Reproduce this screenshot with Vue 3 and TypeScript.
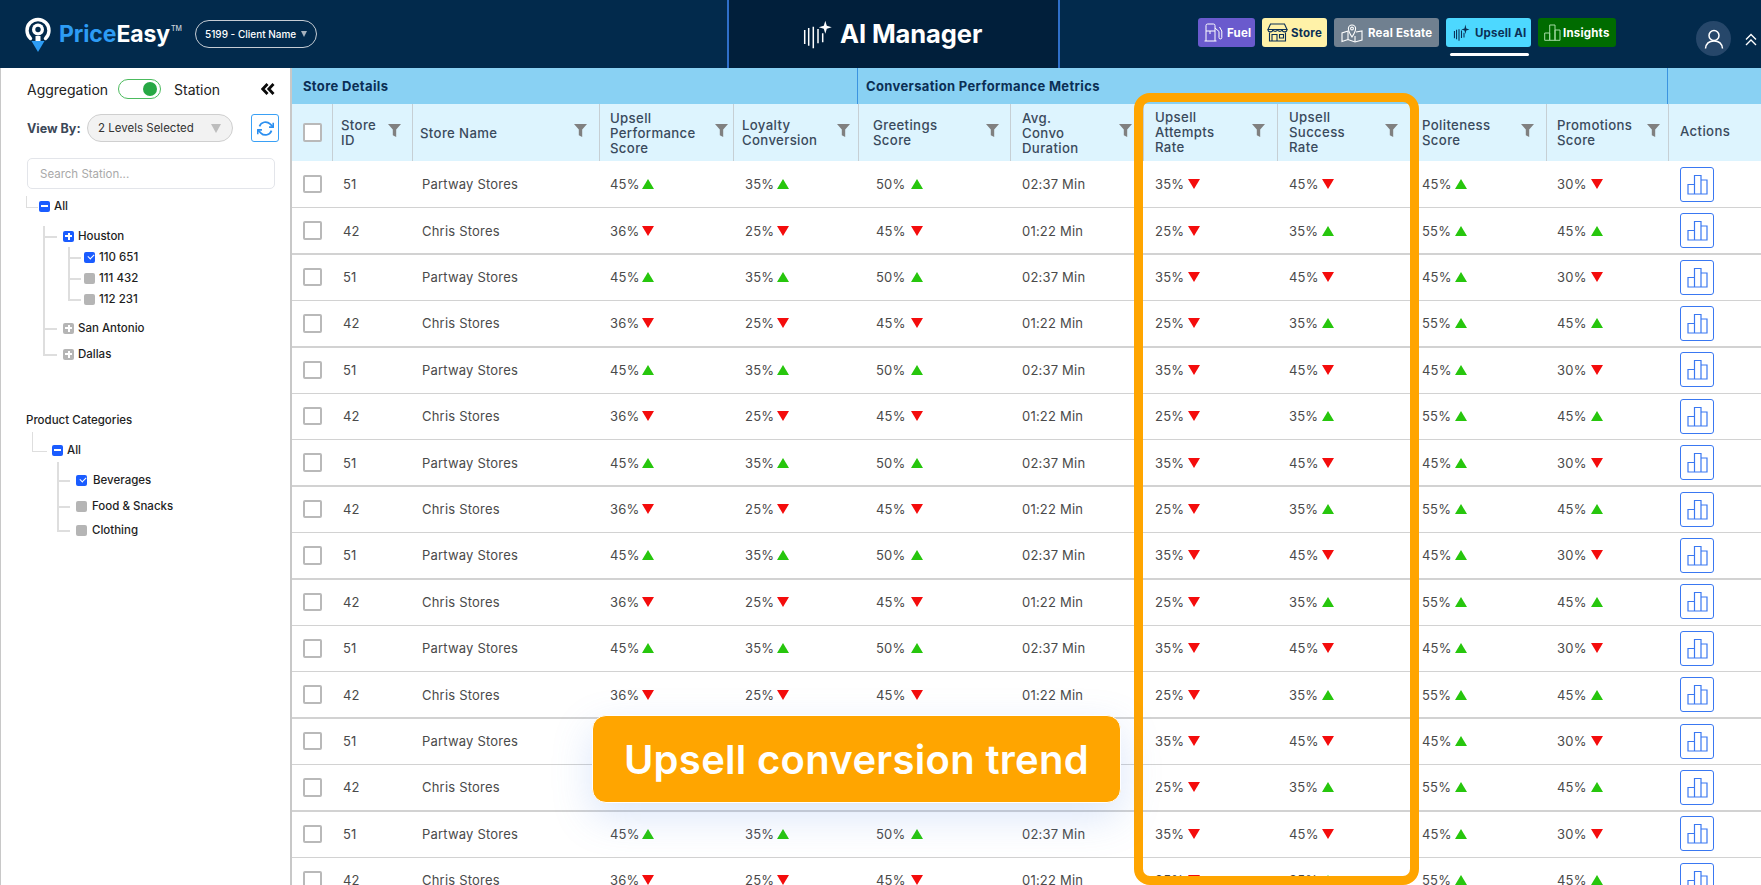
<script setup lang="ts">
type Trend = { v: string; up: boolean }
type Row = {
  id: string
  name: string
  perf: Trend
  loyal: Trend
  greet: Trend
  dur: string
  attempts: Trend
  success: Trend
  polite: Trend
  promo: Trend
}

const a: Row = {
  id: '51',
  name: 'Partway Stores',
  perf: { v: '45%', up: true },
  loyal: { v: '35%', up: true },
  greet: { v: '50%', up: true },
  dur: '02:37 Min',
  attempts: { v: '35%', up: false },
  success: { v: '45%', up: false },
  polite: { v: '45%', up: true },
  promo: { v: '30%', up: false },
}
const b: Row = {
  id: '42',
  name: 'Chris Stores',
  perf: { v: '36%', up: false },
  loyal: { v: '25%', up: false },
  greet: { v: '45%', up: false },
  dur: '01:22 Min',
  attempts: { v: '25%', up: false },
  success: { v: '35%', up: true },
  polite: { v: '55%', up: true },
  promo: { v: '45%', up: true },
}
const rows: Row[] = Array.from({ length: 16 }, (_, i) => (i % 2 === 0 ? a : b))

const heads: { cls: string; lines: string[] }[] = [
  { cls: 'c-id', lines: ['Store', 'ID'] },
  { cls: 'c-name', lines: ['Store Name'] },
  { cls: 'c-perf', lines: ['Upsell', 'Performance', 'Score'] },
  { cls: 'c-loyal', lines: ['Loyalty', 'Conversion'] },
  { cls: 'c-greet', lines: ['Greetings', 'Score'] },
  { cls: 'c-dur', lines: ['Avg.', 'Convo', 'Duration'] },
  { cls: 'c-att', lines: ['Upsell', 'Attempts', 'Rate'] },
  { cls: 'c-succ', lines: ['Upsell', 'Success', 'Rate'] },
  { cls: 'c-pol', lines: ['Politeness', 'Score'] },
  { cls: 'c-promo', lines: ['Promotions', 'Score'] },
]

const trendCols: { cls: string; key: 'perf' | 'loyal' | 'greet' | 'attempts' | 'success' | 'polite' | 'promo' }[] = [
  { cls: 'c-perf', key: 'perf' },
  { cls: 'c-loyal', key: 'loyal' },
  { cls: 'c-greet', key: 'greet' },
]
const trendCols2: typeof trendCols = [
  { cls: 'c-att', key: 'attempts' },
  { cls: 'c-succ', key: 'success' },
  { cls: 'c-pol', key: 'polite' },
  { cls: 'c-promo', key: 'promo' },
]
</script>

<template>
  <div class="page">
    <header class="top">
      <div class="top-left">
        <div class="logo">
          <svg class="pin" width="28" height="38" viewBox="0 0 28 38">
            <path d="M6.5 23.5A11 11 0 1 1 21.5 23.5" fill="none" stroke="#fff" stroke-width="3.4" stroke-linecap="round" />
            <circle cx="14" cy="14.5" r="6" fill="#fff" />
            <circle cx="14" cy="14.5" r="2.7" fill="#022a4c" />
            <path d="M11.5 21h5v5h-5z" fill="#fff" />
            <path d="M7.5 26H20.5L14 37Z" fill="#2d9cf4" />
          </svg>
          <span class="brand"><span class="brand-a">Price</span>Easy<sup class="tm">TM</sup></span>
        </div>
        <div class="client">
          <span>5199 - Client Name</span>
          <i class="client-arrow"></i>
        </div>
      </div>

      <div class="top-center">
        <svg class="ai" width="32" height="32" viewBox="0 0 32 32" fill="none" stroke="currentColor" stroke-width="1.5">
          <path d="M2.7 13V27M6.7 11V28.7M11.3 9.7V31.3M16 12V26.3M20.7 16.3V25.3" />
          <path d="M23.3 3.8L24.8 8.8L29.8 10.3L24.8 11.8L23.3 16.8L21.8 11.8L16.8 10.3L21.8 8.8Z" fill="currentColor" stroke="none" />
        </svg>
        <span class="ai-title">AI Manager</span>
      </div>

      <div class="top-right">
        <nav class="pills">
          <a class="pill p-fuel">
            <svg width="19" height="19" viewBox="0 0 19 19" fill="none" stroke="currentColor" stroke-width="1">
              <path d="M2 18V2.6A1.6 1.6 0 0 1 3.6 1H9.4A1.6 1.6 0 0 1 11 2.6V18M.5 18H12.5M2 8H11M6 8V11" />
              <path d="M11 5L15 8.5V14.5A1.4 1.4 0 0 0 17.8 14.5V8L15.5 4" />
            </svg>
            <span>Fuel</span>
          </a>
          <a class="pill p-store">
            <svg width="21" height="19" viewBox="0 0 21 19" fill="none" stroke="currentColor" stroke-width="1.1">
              <path d="M3.5 1H17.5L20 6.5H1Z" />
              <path d="M1 6.5A2.4 2.4 0 0 0 5.8 6.5A2.4 2.4 0 0 0 10.5 6.5A2.4 2.4 0 0 0 15.2 6.5A2.4 2.4 0 0 0 20 6.5" />
              <path d="M2.5 9.5V18H18.5V9.5M5 18V11.5H10V18M12.5 11.5H16.5V15H12.5Z" />
            </svg>
            <span>Store</span>
          </a>
          <a class="pill p-real">
            <svg width="22" height="20" viewBox="0 0 22 20" fill="none" stroke="currentColor" stroke-width="1.1">
              <path d="M7 8L1 10V18.5L7 16.5L14 19L21 17V8L15 9" />
              <path d="M7 8V16.5M14 13V19" />
              <path d="M11 14C8.5 10.5 7.4 8.6 7.4 5.6A3.6 3.6 0 0 1 14.6 5.6C14.6 8.6 13.5 10.5 11 14Z" />
              <circle cx="11" cy="5.5" r="1.4" />
            </svg>
            <span>Real Estate</span>
          </a>
          <a class="pill p-up">
            <svg width="17" height="17" viewBox="0 0 32 32" fill="none" stroke="currentColor" stroke-width="2">
              <path d="M2.7 13V27M6.7 11V28.7M11.3 9.7V31.3M16 12V26.3M20.7 16.3V25.3" />
              <path d="M23.3 1L25 8.3L31 10.3L25 12.3L23.3 19L21.6 12.3L15.6 10.3L21.6 8.3Z" fill="currentColor" stroke="none" />
            </svg>
            <span>Upsell AI</span>
          </a>
          <a class="pill p-ins">
            <svg width="17" height="17" viewBox="0 0 17 17" fill="none" stroke="currentColor" stroke-width="1">
              <path d="M.7 16.3V9H5.7V16.3ZM5.7 16.3V1H11V16.3ZM11 16.3V6H16V16.3Z" />
            </svg>
            <span>Insights</span>
          </a>
        </nav>
        <div class="avatar">
          <svg width="20" height="20" viewBox="0 0 20 20" fill="none" stroke="#fff" stroke-width="1.5">
            <circle cx="10" cy="6.5" r="5" />
            <path d="M1.5 19.5C2 14.5 5 12 10 12S18 14.5 18.5 19.5" />
          </svg>
        </div>
        <svg class="collapse" width="12" height="13" viewBox="0 0 12 13" fill="none" stroke="#fff" stroke-width="1.4">
          <path d="M1 6.5L6 1.5L11 6.5M1 12L6 7L11 12" />
        </svg>
      </div>
    </header>

    <main class="body">
      <aside class="side">
        <div class="agg">
          <span class="agg-a">Aggregation</span>
          <span class="switch"><i></i></span>
          <span class="agg-b">Station</span>
          <svg class="dbl" width="14" height="12" viewBox="0 0 14 12" fill="none" stroke="#0a0a0a" stroke-width="2.8">
            <path d="M6.5 1L1.8 6L6.5 11M12.5 1L7.8 6L12.5 11" />
          </svg>
        </div>
        <div class="viewby">
          <span class="vb-label">View By:</span>
          <div class="vb-select">
            <span>2 Levels Selected</span>
            <i></i>
          </div>
          <button class="refresh">
            <svg width="17" height="17" viewBox="0 0 24 24" fill="none" stroke="#2b8ff0" stroke-width="2.4" stroke-linejoin="round">
              <path d="M23 4v6h-6M1 20v-6h6" />
              <path d="M3.5 9a9 9 0 0 1 14.9-3.4L23 10M1 14l4.6 4.4A9 9 0 0 0 20.5 15" />
            </svg>
          </button>
        </div>
        <div class="search">Search Station...</div>

        <div class="tree t-station">
          <div class="node elbow-a"><i class="box blue minus"></i><span class="label">All</span></div>
          <div class="branch b1">
            <div class="node h1 houston"><i class="box blue plus"></i><span class="label">Houston</span></div>
            <div class="branch b2">
              <div class="node h2"><i class="box blue check"></i><span class="label">110 651</span></div>
              <div class="node h2 g1"><i class="box gray"></i><span class="label">111 432</span></div>
              <div class="node h2 g1"><i class="box gray"></i><span class="label">112 231</span></div>
            </div>
            <div class="node h1 san"><i class="box gray plus"></i><span class="label">San Antonio</span></div>
            <div class="node h1 dallas"><i class="box gray plus"></i><span class="label">Dallas</span></div>
          </div>
        </div>

        <div class="cat-title">Product Categories</div>
        <div class="tree t-cat">
          <div class="node elbow-b"><i class="box blue minus"></i><span class="label">All</span></div>
          <div class="branch b3">
            <div class="node h3"><i class="box blue check"></i><span class="label wide">Beverages</span></div>
            <div class="node h3 food"><i class="box gray"></i><span class="label mid">Food &amp; Snacks</span></div>
            <div class="node h3 cloth"><i class="box gray"></i><span class="label mid">Clothing</span></div>
          </div>
        </div>
      </aside>

      <section class="table">
        <div class="band">
          <div class="band-a">Store Details</div>
          <div class="band-b">Conversation Performance Metrics</div>
          <div class="band-c"></div>
        </div>

        <div class="grid head">
          <div class="th c-check"><i class="cb"></i></div>
          <div v-for="h in heads" :key="h.cls" class="th" :class="h.cls">
            <div class="th-text">
              <span v-for="l in h.lines" :key="l">{{ l }}</span>
            </div>
            <svg class="funnel" width="13" height="13" viewBox="0 0 13 13">
              <path d="M0 0H13L8.2 5.6V13L4.8 11.3V5.6Z" fill="#808080" />
            </svg>
          </div>
          <div class="th c-act"><div class="th-text">Actions</div></div>
        </div>

        <div v-for="(r, i) in rows" :key="i" class="grid row">
          <div class="td c-check"><i class="cb"></i></div>
          <div class="td c-id">{{ r.id }}</div>
          <div class="td c-name">{{ r.name }}</div>
          <div v-for="t in trendCols" :key="t.key" class="td" :class="t.cls">
            <span class="val">{{ r[t.key].v }}</span>
            <i class="tri" :class="r[t.key].up ? 'up' : 'down'"></i>
          </div>
          <div class="td c-dur">{{ r.dur }}</div>
          <div v-for="t in trendCols2" :key="t.key" class="td" :class="t.cls">
            <span class="val">{{ r[t.key].v }}</span>
            <i class="tri" :class="r[t.key].up ? 'up' : 'down'"></i>
          </div>
          <div class="td c-act">
            <button class="chart">
              <svg width="21" height="21" viewBox="0 0 21 21" fill="none" stroke="#3a78f2" stroke-width="1.2">
                <path d="M1 20V10.5H7.5V20ZM7.5 20V1.5H14V20ZM14 20V6H20V20Z" />
              </svg>
            </button>
          </div>
        </div>
      </section>
    </main>

    <div class="frame"></div>
    <div class="callout">Upsell conversion trend</div>
  </div>
</template>

<style>
html,
body {
  margin: 0;
  background: #fff;
  overflow: hidden;
}
</style>

<style scoped>
* {
  box-sizing: border-box;
}
.page {
  position: relative;
  width: 1761px;
  height: 885px;
  overflow: hidden;
  font-family: Inter, "Liberation Sans", sans-serif;
  color: #333;
}

/* top bar */
.top {
  display: grid;
  grid-template-columns: 727px 333px 701px;
  height: 68px;
  background: #022a4c;
  color: #fff;
}
.top-left {
  display: flex;
  align-items: center;
  padding-left: 24px;
}
.logo {
  display: flex;
  align-items: center;
}
.pin {
  margin-top: -1px;
}
.brand {
  margin-left: 7px;
  font-size: 23px;
  font-weight: 700;
  letter-spacing: -0.1px;
  color: #fff;
  width: 118px;
  white-space: nowrap;
}
.brand-a {
  color: #2d9cf4;
}
.tm {
  font-size: 7px;
  font-weight: 500;
  vertical-align: 11px;
  line-height: 0;
  margin-left: 1px;
  color: #c9d3dc;
}
.client {
  display: flex;
  align-items: center;
  justify-content: space-between;
  width: 122px;
  height: 28px;
  margin-left: 18px;
  padding: 0 9px 0 9px;
  border: 1px solid #c5ccd3;
  border-radius: 14px;
  font-size: 10px;
  font-weight: 500;
  white-space: nowrap;
}
.client-arrow {
  width: 0;
  height: 0;
  border-left: 3.5px solid transparent;
  border-right: 3.5px solid transparent;
  border-top: 6px solid #a7b2bd;
}
.top-center {
  display: flex;
  align-items: center;
  padding-left: 73px;
  background: #011f3b;
  border-left: 2px solid #2f6fc9;
  border-right: 2px solid #2f6fc9;
}
.ai {
  margin-top: -3px;
}
.ai-title {
  margin-left: 6px;
  margin-top: -2px;
  font-size: 25.5px;
  font-weight: 700;
  letter-spacing: -0.1px;
  white-space: nowrap;
}
.top-right {
  display: flex;
  align-items: flex-start;
  padding: 18px 0 0 138px;
}
.pills {
  display: flex;
  gap: 7px;
}
.pill {
  position: relative;
  display: flex;
  align-items: center;
  height: 29px;
  border-radius: 3px;
  font-size: 11.5px;
  font-weight: 700;
  letter-spacing: 0.2px;
  white-space: nowrap;
}
.p-fuel {
  width: 57px;
  padding-left: 6px;
  gap: 4px;
  background: #6a5acd;
  color: #fff;
}
.p-store {
  width: 65px;
  padding-left: 5px;
  gap: 3px;
  background: #fff2a8;
  color: #0b2f55;
}
.p-real {
  width: 105px;
  padding-left: 7px;
  gap: 5px;
  background: #708090;
  color: #fff;
}
.p-up {
  width: 85px;
  padding-left: 7px;
  gap: 5px;
  background: #4dd8ff;
  color: #0b2f55;
}
.p-up::after {
  content: "";
  position: absolute;
  left: 4px;
  right: 2px;
  top: 35px;
  height: 3px;
  border-radius: 2px;
  background: #fff;
}
.p-ins {
  width: 78px;
  padding-left: 6px;
  gap: 2px;
  background: #006b00;
  color: #fff;
}
.p-ins svg {
  color: #a6dba6;
}
.avatar {
  display: flex;
  align-items: center;
  justify-content: center;
  width: 35px;
  height: 35px;
  margin: 3px 0 0 80px;
  border-radius: 50%;
  background: #26476a;
}
.collapse {
  margin: 15px 0 0 14px;
}

/* layout */
.body {
  display: flex;
  height: 817px;
}
.side {
  flex: none;
  width: 292px;
  padding: 11px 0 0 26px;
  border-left: 1px solid #c8c8c8;
  border-right: 2px solid #c8c8c8;
  background: #fff;
}
.agg {
  display: flex;
  align-items: center;
  height: 20px;
  font-size: 14px;
  color: #222;
}
.agg-a {
  width: 91px;
}
.switch {
  display: flex;
  align-items: center;
  justify-content: flex-end;
  width: 43px;
  height: 20px;
  padding-right: 3px;
  border: 1.5px solid #4cbb5e;
  border-radius: 10px;
}
.switch i {
  width: 14px;
  height: 14px;
  border-radius: 50%;
  background: #27a844;
}
.agg-b {
  margin-left: 13px;
  width: 87px;
}
.viewby {
  display: flex;
  align-items: center;
  height: 28px;
  margin-top: 15px;
}
.vb-label {
  width: 60px;
  font-size: 12.5px;
  font-weight: 700;
  color: #3c4858;
  white-space: nowrap;
}
.vb-select {
  display: flex;
  align-items: center;
  justify-content: space-between;
  width: 146px;
  height: 28px;
  padding: 0 11px 0 10px;
  background: #f2f2f2;
  border: 1px solid #cfcfcf;
  border-radius: 14px;
  font-size: 11.5px;
  color: #333;
  white-space: nowrap;
}
.vb-select i {
  width: 0;
  height: 0;
  border-left: 5.5px solid transparent;
  border-right: 5.5px solid transparent;
  border-top: 9px solid #bdbdbd;
}
.refresh {
  display: flex;
  align-items: center;
  justify-content: center;
  width: 28px;
  height: 28px;
  margin-left: 18px;
  padding: 0;
  background: #fff;
  border: 1px solid #3aa0f5;
  border-radius: 3px;
}
.search {
  display: flex;
  align-items: center;
  width: 248px;
  height: 31px;
  margin-top: 16px;
  padding-left: 12px;
  border: 1.5px solid #e3e5ea;
  border-radius: 5px;
  font-size: 11.5px;
  color: #a9a9a9;
}
.t-station {
  margin-top: 7px;
}
.node {
  position: relative;
  display: flex;
  align-items: center;
  height: 20px;
  font-size: 11.5px;
  font-weight: 500;
  color: #1e1e1e;
  white-space: nowrap;
}
.label {
  margin-left: 4px;
}
.label.wide {
  margin-left: 6px;
}
.label.mid {
  margin-left: 5px;
}
.box {
  position: relative;
  flex: none;
  width: 11px;
  height: 11px;
  border-radius: 2px;
}
.blue {
  background: #1a5cff;
}
.gray {
  background: #b5b5b5;
}
.minus::after,
.plus::after {
  content: "";
  position: absolute;
  left: 2px;
  right: 2px;
  top: 4.5px;
  height: 2px;
  background: #fff;
}
.plus::before {
  content: "";
  position: absolute;
  top: 2px;
  bottom: 2px;
  left: 4.5px;
  width: 2px;
  background: #fff;
}
.check::after {
  content: "";
  position: absolute;
  left: 3.5px;
  top: 2.5px;
  width: 5px;
  height: 3px;
  border-left: 1px solid #fff;
  border-bottom: 1px solid #fff;
  transform: rotate(-45deg);
}
.elbow-a {
  margin-left: 12px;
}
.elbow-a::before {
  content: "";
  position: absolute;
  left: -13px;
  top: 0;
  width: 11px;
  height: 11px;
  border-left: 1.5px solid #dedede;
  border-bottom: 1.5px solid #dedede;
}
.branch {
  position: relative;
}
.branch::before {
  content: "";
  position: absolute;
  left: 0;
  top: 0;
  bottom: 10px;
  width: 1.5px;
  background: #dedede;
}
.node.h1::before,
.node.h2::before,
.node.h3::before {
  content: "";
  position: absolute;
  top: 10px;
  height: 1.5px;
  background: #dedede;
}
.b1 {
  margin-left: 16px;
  padding-left: 20px;
}
.houston {
  margin-top: 10px;
}
.h1::before {
  left: -20px;
  width: 14px;
}
.b2 {
  margin-left: 5px;
  margin-top: 1px;
  padding-left: 16px;
}
.h2::before {
  left: -16px;
  width: 13px;
}
.g1 {
  margin-top: 1px;
}
.san {
  margin-top: 9px;
}
.dallas {
  margin-top: 6px;
}
.cat-title {
  height: 20px;
  margin-top: 46px;
  margin-left: -1px;
  line-height: 20px;
  font-size: 11.5px;
  font-weight: 500;
  color: #1e1e1e;
}
.t-cat {
  margin-top: 10px;
}
.elbow-b {
  margin-left: 25px;
}
.elbow-b::before {
  content: "";
  position: absolute;
  left: -20.5px;
  top: -8px;
  width: 14px;
  height: 19px;
  border-left: 1.5px solid #dedede;
  border-bottom: 1.5px solid #dedede;
}
.b3 {
  margin-left: 30px;
  margin-top: 2px;
  padding: 8px 0 0 19px;
}
.h3::before {
  left: -19px;
  width: 13px;
}
.food {
  margin-top: 6px;
}
.cloth {
  margin-top: 4px;
}

/* table */
.table {
  flex: none;
  width: 1469px;
  overflow: hidden;
}
.band {
  display: grid;
  grid-template-columns: 566px 810px 93px;
  height: 36px;
  background: #89d1f3;
  font-size: 13px;
  font-weight: 700;
  letter-spacing: 0.35px;
  color: #0b2f55;
}
.band-a,
.band-b {
  display: flex;
  align-items: center;
  border-right: 1px solid #3b93e0;
}
.band-a {
  padding-left: 11px;
}
.band-b {
  padding-left: 8px;
}
.grid {
  display: grid;
  grid-template-columns: 40px 80px 187px 134px 125px 152px 133px 134px 133px 136px 122px 93px;
}
.head {
  height: 57px;
  background: #ddf4fe;
}
.th {
  position: relative;
  display: flex;
  align-items: center;
  justify-content: space-between;
  font-size: 13.2px;
  font-weight: 500;
  letter-spacing: 0.35px;
  line-height: 14.7px;
  color: #3a4a5c;
}
.th::after {
  content: "";
  position: absolute;
  top: 0;
  bottom: 0;
  right: -1px;
  width: 1.5px;
  background: #c6cfd4;
}
.th.c-act::after {
  display: none;
}
.th-text span {
  display: block;
  white-space: nowrap;
}
.c-perf .th-text,
.c-dur .th-text {
  margin-top: 2px;
}
.c-name .th-text {
  margin-top: 2px;
}
.c-act .th-text {
  margin-top: -2px;
}
.funnel {
  flex: none;
  margin-top: -5px;
}
.th.c-check {
  padding-left: 11px;
}
.th.c-id {
  padding: 0 11px 0 9px;
}
.th.c-name {
  padding: 0 12px 0 8px;
}
.th.c-perf {
  padding: 0 5px 0 11px;
}
.th.c-loyal {
  padding: 0 8px 0 9px;
}
.th.c-greet {
  padding: 0 11px 0 15px;
}
.th.c-dur {
  padding: 0 11px 0 12px;
}
.th.c-att {
  padding: 0 12px 0 12px;
}
.th.c-succ {
  padding: 0 12px 0 12px;
}
.th.c-pol {
  padding: 0 12px 0 12px;
}
.th.c-promo {
  padding: 0 8px 0 11px;
}
.th.c-act {
  padding: 0 0 0 12px;
}
.cb {
  display: block;
  width: 18.5px;
  height: 18.5px;
  background: #fff;
  border: 2px solid #b9b9b9;
  border-radius: 2px;
}
.row {
  position: relative;
  height: 46.42px;
}
.row::after {
  content: "";
  position: absolute;
  left: 0;
  right: 0;
  bottom: -1px;
  height: 1.5px;
  background: #d2d2d2;
}
.td {
  display: flex;
  align-items: center;
  font-size: 13px;
  letter-spacing: 0.2px;
  color: #4a4a4a;
  white-space: nowrap;
}
.td.c-check {
  padding-left: 11px;
}
.td.c-id {
  padding-left: 11px;
}
.td.c-name {
  padding-left: 10px;
}
.td.c-perf {
  padding-left: 11px;
}
.td.c-loyal {
  padding-left: 12px;
}
.td.c-greet {
  padding-left: 18px;
}
.td.c-dur,
.td.c-att,
.td.c-succ,
.td.c-pol,
.td.c-act {
  padding-left: 12px;
}
.td.c-promo {
  padding-left: 11px;
}
.val {
  width: 32px;
}
.c-greet .val {
  width: 35px;
}
.c-att .val,
.c-succ .val,
.c-pol .val {
  width: 33px;
}
.c-promo .val {
  width: 33.5px;
}
.tri {
  width: 0;
  height: 0;
  border-left: 6px solid transparent;
  border-right: 6px solid transparent;
}
.tri.up {
  border-bottom: 10.5px solid #27c60d;
}
.tri.down {
  border-top: 10.5px solid #f40c0c;
}
.chart {
  display: flex;
  align-items: center;
  justify-content: center;
  width: 34px;
  height: 35px;
  padding: 0;
  background: #fff;
  border: 1px solid #3a78f2;
  border-radius: 3px;
}

/* annotations */
.frame {
  position: absolute;
  left: 1134px;
  top: 93px;
  width: 285px;
  height: 792px;
  border: 9px solid #ffa500;
  border-radius: 16px;
}
.callout {
  position: absolute;
  left: 592px;
  top: 715px;
  display: flex;
  align-items: center;
  justify-content: center;
  width: 529px;
  height: 88px;
  padding-top: 1px;
  background: #ffa500;
  border: 1px solid #fff;
  border-radius: 14px;
  box-shadow: 0 14px 40px rgba(90, 140, 230, 0.22);
  color: #fff;
  font-size: 40px;
  font-weight: 600;
  letter-spacing: 0.3px;
  white-space: nowrap;
}
</style>
